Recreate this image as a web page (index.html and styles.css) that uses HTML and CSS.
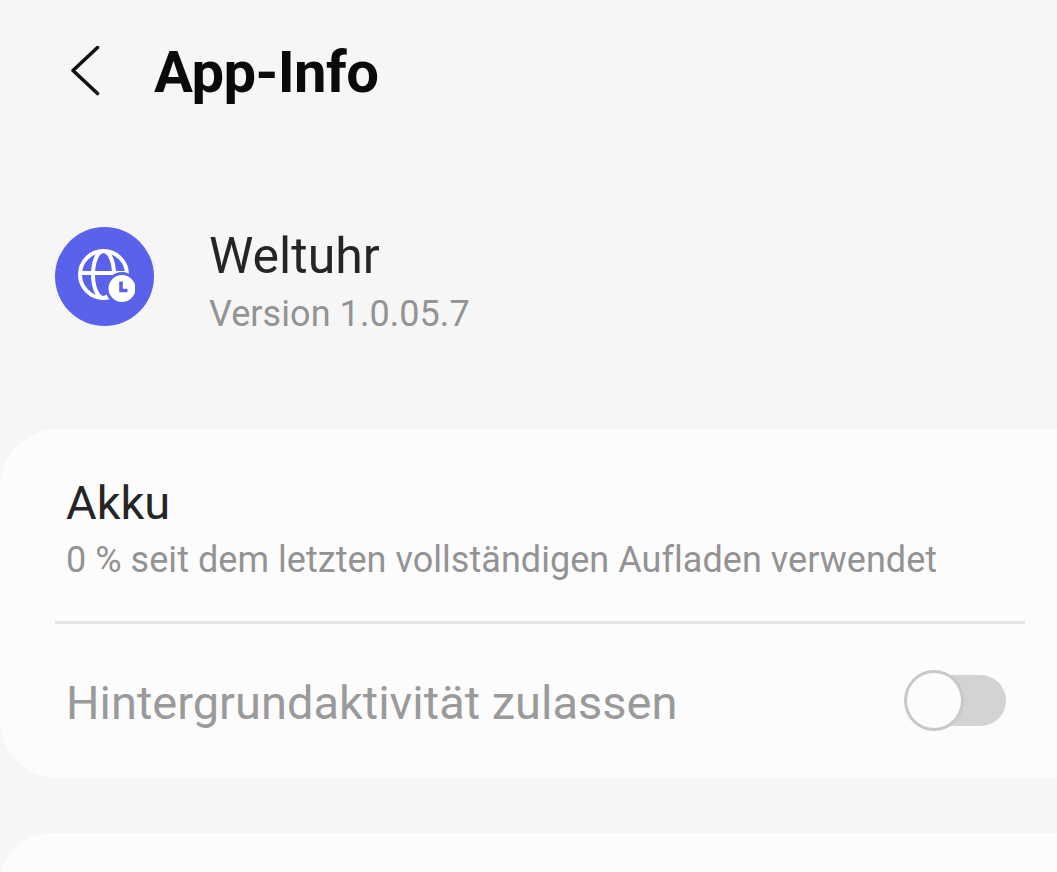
FILE: index.html
```html
<!DOCTYPE html>
<html lang="de">

<head>
  <meta charset="utf-8">
  <title>App-Info</title>
  <link rel="stylesheet" href="styles.css">
</head>

<body>
  <div class="screen">
    <div class="topbar">
      <svg class="back" width="30" height="52" viewBox="0 0 30 52">
        <path d="M27.5 1.5 L3 24.5 L27.5 47.5" />
      </svg>
      <h1>App-Info</h1>
    </div>

    <div class="app">
      <div class="app-icon">
        <svg width="60" height="60" viewBox="0 0 60 60">
          <g class="globe">
            <circle cx="28.5" cy="28.5" r="23.5" />
            <ellipse cx="28.5" cy="28.5" rx="10.5" ry="23.5" />
            <path d="M5 27 H52" />
          </g>
          <circle class="clock" cx="47" cy="42.5" r="15" />
          <path class="hands" d="M46 35.5 V44.5 H52.5" />
        </svg>
      </div>
      <div class="app-text">
        <div class="app-name">Weltuhr</div>
        <div class="app-version">Version 1.0.05.7</div>
      </div>
    </div>

    <div class="card">
      <div class="row-battery">
        <div class="row-title">Akku</div>
        <div class="row-sub">0 % seit dem letzten vollständigen Aufladen verwendet</div>
      </div>
      <div class="divider"></div>
      <div class="row-bg">
        <div class="row-title disabled">Hintergrundaktivität zulassen</div>
        <div class="switch">
          <div class="knob"></div>
        </div>
      </div>
    </div>

    <div class="card card-next"></div>
  </div>
</body>

</html>
```

FILE: styles.css
```css
html, body {
  margin: 0;
  padding: 0;
}

body {
  background-color: #f6f6f6;
  font-family: "Roboto", "Liberation Sans", sans-serif;
  overflow: hidden;
}

.screen {
  width: 1057px;
  height: 872px;
  overflow: hidden;
}

.topbar {
  display: flex;
  align-items: center;
  height: 52px;
  padding: 46px 0 0 70px;
}

.back {
  fill: none;
  stroke: #111;
  stroke-width: 3.6;
  stroke-linecap: round;
  stroke-linejoin: round;
}

h1 {
  margin: 0 0 0 54px;
  font-size: 58px;
  font-weight: 700;
  letter-spacing: -0.6px;
  color: #0a0a0a;
}

.app {
  display: flex;
  align-items: center;
  margin-top: 119px;
  padding-left: 55px;
}

.app-icon {
  display: flex;
  align-items: center;
  justify-content: center;
  width: 99px;
  height: 99px;
  border-radius: 50%;
  background-color: #5a62ec;
}

.globe {
  fill: none;
  stroke: #fff;
  stroke-width: 4;
}

.clock {
  fill: #fff;
  stroke: #5a62ec;
  stroke-width: 3;
}

.hands {
  fill: none;
  stroke: #5a62ec;
  stroke-width: 3.6;
}

.app-text {
  margin-left: 55px;
  padding-top: 10px;
}

.app-name {
  font-size: 50px;
  line-height: 58px;
  color: #252525;
}

.app-version {
  margin-top: 8px;
  font-size: 36px;
  line-height: 42px;
  letter-spacing: 0.06px;
  color: #939393;
}

.card {
  background-color: #fcfcfc;
  border-radius: 58px;
  margin-right: -60px;
  margin-top: 94px;
  height: 349px;
}

.row-battery {
  padding: 46px 0 0 66px;
  height: 146px;
  box-sizing: border-box;
}

.row-title {
  font-size: 47px;
  line-height: 56px;
  color: #252525;
}

.row-sub {
  margin-top: 7px;
  font-size: 36px;
  line-height: 44px;
  letter-spacing: 0.04px;
  color: #939393;
}

.divider {
  height: 3px;
  width: 970px;
  margin: 46px 0 0 55px;
  background-color: #e4e4e4;
}

.row-bg {
  display: flex;
  align-items: center;
  justify-content: space-between;
  width: 940px;
  margin-top: 45px;
  padding-left: 66px;
}

.row-bg .disabled {
  margin-top: 6px;
  color: #9a9a9a;
}

.switch {
  position: relative;
  width: 100px;
  height: 51px;
  border-radius: 26px;
  background-color: #d3d3d3;
}

.knob {
  position: absolute;
  left: -2px;
  top: -5px;
  width: 54px;
  height: 55px;
  border: 3px solid #c8c8c8;
  border-radius: 50%;
  background-color: #fcfcfc;
}

.card.card-next {
  margin-top: 55px;
  height: 100px;
}
```
